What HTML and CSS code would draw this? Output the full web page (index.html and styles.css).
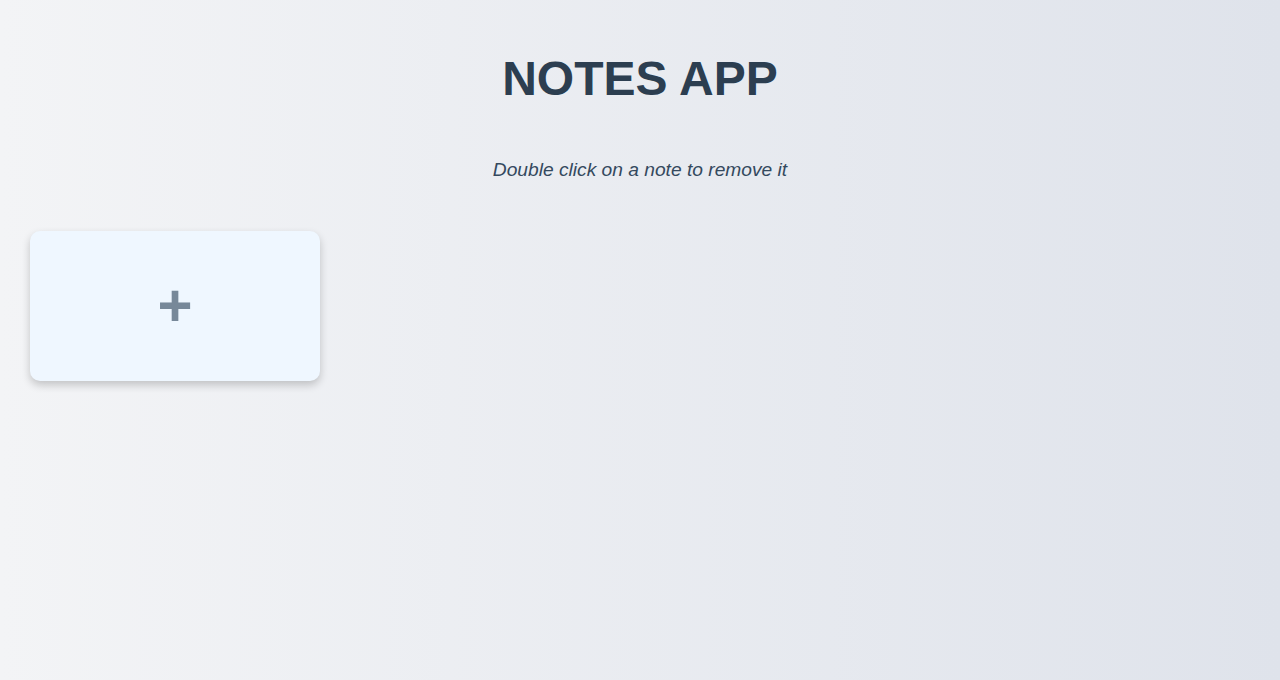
FILE: index.html
```html
<!DOCTYPE html>
<html lang="en">
<head>
<meta charset="utf-8">
<title>Notes App</title>
<link rel="stylesheet" href="styles.css">
</head>
<body>
<div class="app">
  <h1 class="title">NOTES APP</h1>
  <p class="hint">Double click on a note to remove it</p>
  <div class="notes">
    <button class="add-note" type="button">+</button>
  </div>
</div>
</body>
</html>
```

FILE: styles.css
```css
html, body {
  margin: 0;
  padding: 0;
  height: 100%;
}
body {
  background: linear-gradient(to right, #f3f4f6, #dfe3eb);
  font-family: "Liberation Sans", Arial, sans-serif;
  color: #2c3e50;
}
.app {
  padding: 51px 30px 30px;
}
.title {
  margin: 0;
  text-align: center;
  font-size: 48px;
  font-weight: bold;
  line-height: 55px;
  color: #2c3e50;
}
.hint {
  margin: 53px 0 0;
  text-align: center;
  font-size: 19.2px;
  font-style: italic;
  line-height: 21px;
  color: #34495e;
}
.notes {
  margin-top: 51px;
  display: flex;
  flex-wrap: wrap;
  gap: 30px;
}
.add-note {
  width: 290px;
  height: 150px;
  border: none;
  border-radius: 10px;
  background: #eff7ff;
  box-shadow: 0 4px 8px rgba(0, 0, 0, 0.2);
  font-family: "Liberation Sans", Arial, sans-serif;
  font-size: 60px;
  font-weight: bold;
  line-height: 1;
  color: #778899;
  cursor: pointer;
  padding: 0;
  display: flex;
  align-items: center;
  justify-content: center;
}
```
